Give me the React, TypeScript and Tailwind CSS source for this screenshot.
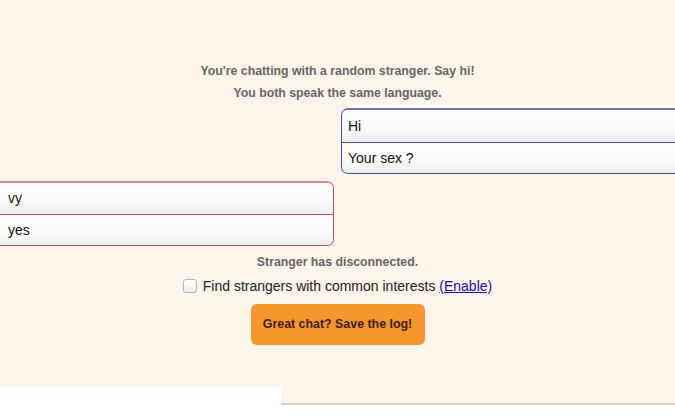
import React from "react";

const font = { fontFamily: '"Liberation Sans", Arial, Helvetica, sans-serif' };

export default function App() {
  return (
    <div className="w-[675px] h-[419px] overflow-hidden bg-[#fdf4eb] flex flex-col" style={font}>
      <div className="h-[387px] flex flex-col overflow-hidden">
        <div className="pt-[62px]" />
        <p className="h-[18px] leading-[18px] text-center text-[12.3px] font-bold text-[#666666]">
          You're chatting with a random stranger. Say hi!
        </p>
        <p className="mt-[4px] h-[18px] leading-[18px] text-center text-[12.3px] font-bold text-[#666666]">
          You both speak the same language.
        </p>

        <div className="mt-[6px] ml-[341px] w-[380px] shrink-0 rounded-l-[7px] border border-[#4d4da8] border-t-2 border-t-[#7070c0] overflow-hidden">
          <div className="h-[33px] flex items-center pl-[6px] text-[14px] text-[#111] bg-gradient-to-b from-[#ffffff] via-[#fbfbfc] to-[#efeff3] border-b border-[#4d4da8]">
            Hi
          </div>
          <div className="h-[30px] flex items-center pl-[6px] text-[14px] text-[#111] bg-gradient-to-b from-[#ffffff] via-[#fbfbfc] to-[#efeff3]">
            Your sex ?
          </div>
        </div>

        <div className="mt-[7px] -ml-[10px] w-[344px] shrink-0 rounded-r-[7px] border border-[#b8525c] border-t-2 border-t-[#d08a90] overflow-hidden">
          <div className="h-[32px] flex items-center pl-[17px] text-[14px] text-[#111] bg-gradient-to-b from-[#ffffff] via-[#fbfbfb] to-[#f0eff0] border-b border-[#b8525c]">
            vy
          </div>
          <div className="h-[30px] flex items-center pl-[17px] text-[14px] text-[#111] bg-gradient-to-b from-[#ffffff] via-[#fbfbfb] to-[#f0eff0]">
            yes
          </div>
        </div>

        <p className="mt-[7px] h-[18px] leading-[18px] text-center text-[12.3px] font-bold text-[#666666]">
          Stranger has disconnected.
        </p>

        <div className="mt-[5px] h-[20px] flex items-center justify-center gap-[6px] text-[14px] text-[#222]">
          <span className="w-[14px] h-[14px] rounded-[3px] border border-[#b5b5b5] bg-gradient-to-b from-[#ffffff] to-[#ececec] shadow-[inset_0_1px_0_#fff]" />
          <span>
            Find strangers with common interests{" "}
            <a href="#" className="text-[#1a0dab] underline">(Enable)</a>
          </span>
        </div>

        <div className="mt-[8px] flex justify-center">
          <button className="w-[174px] h-[41px] rounded-[6px] bg-[#f8962e] text-[12.4px] font-bold text-[#3a1a08]" style={font}>
            Great chat? Save the log!
          </button>
        </div>
      </div>

      <div className="flex flex-1">
        <div className="w-[281px] bg-white" />
        <div className="flex-1 flex flex-col">
          <div className="h-[16px] bg-[#fdf4eb]" />
          <div className="h-[2px] bg-[#d9d0c8]" />
          <div className="flex-1 bg-white" />
        </div>
      </div>
    </div>
  );
}
